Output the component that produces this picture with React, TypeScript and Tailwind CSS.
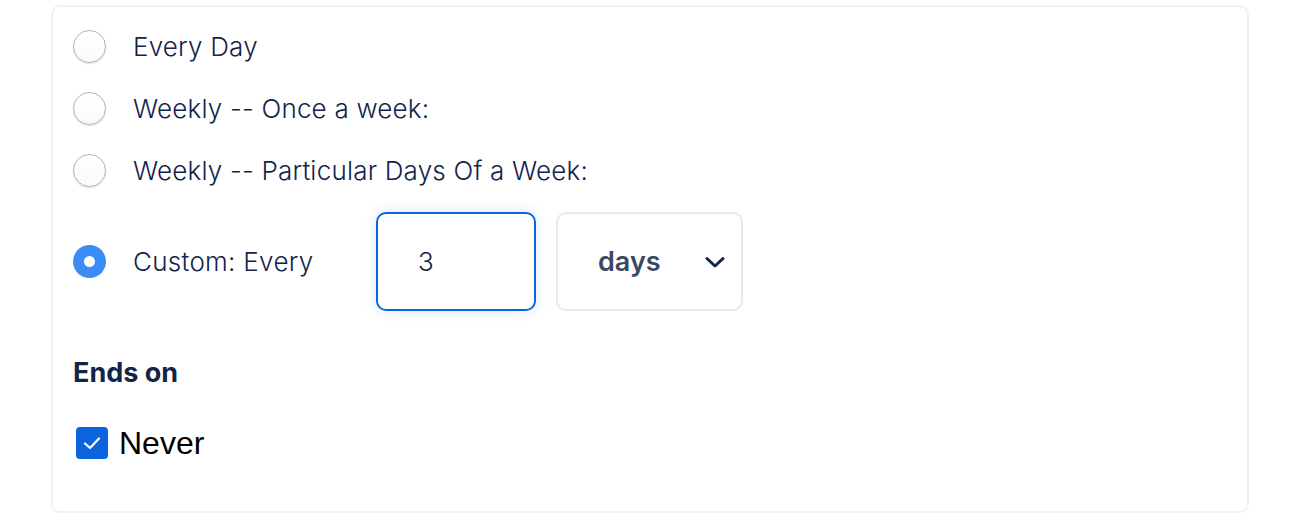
import React from "react";

const Radio = ({ checked }: { checked?: boolean }) =>
  checked ? (
    <span className="flex h-[33px] w-[33px] shrink-0 items-center justify-center rounded-full bg-[#3b8cf7]">
      <span className="h-[11px] w-[11px] rounded-full bg-white" />
    </span>
  ) : (
    <span className="block h-[33px] w-[33px] shrink-0 rounded-full border-[1.5px] border-[#b3b3b3] bg-gradient-to-b from-white to-[#fafafa] shadow-[0_1px_1.5px_rgba(0,0,0,0.14)]" />
  );

export default function App() {
  return (
    <div className="min-h-[526px] bg-white pl-[51px] pt-[5px]" style={{ fontFamily: "Inter, 'Noto Sans', sans-serif" }}>
      <div className="flex h-[508px] w-[1198px] flex-col rounded-[9px] border-2 border-[#f1f1f1] pl-[20px] pt-[8px]">
        {["Every Day", "Weekly -- Once a week:", "Weekly -- Particular Days Of a Week:"].map((t) => (
          <div key={t} className="flex h-[62px] items-center">
            <Radio />
            <span className="ml-[27px] text-[26px] font-light tracking-[0.2px] text-[#122449]">{t}</span>
          </div>
        ))}
        <div className="mt-[11px] flex h-[99px] items-center">
          <Radio checked />
          <span className="ml-[27px] w-[243px] text-[26px] font-light tracking-[0.3px] text-[#122449]">Custom: Every</span>
          <div className="flex h-[99px] w-[160px] items-center rounded-[10px] border-2 border-[#0b66dd] bg-white pl-[40px] text-[26px] font-light text-[#122449] shadow-[0_0_14px_rgba(11,102,221,0.14)]">
            3
          </div>
          <div className="ml-[20px] flex h-[99px] w-[187px] items-center justify-between rounded-[10px] border-2 border-[#e6eaf3] bg-white pl-[40px] pr-[16px] pt-[2px]">
            <span className="text-[27px] font-semibold text-[#3a4961]">days</span>
            <svg width="20" height="13" viewBox="0 0 20 13" fill="none">
              <path d="M2 2.5 L10 10 L18 2.5" stroke="#14244a" strokeWidth="3" strokeLinecap="round" strokeLinejoin="round" />
            </svg>
          </div>
        </div>
        <div className="mt-[46px] h-[32px] text-[27px] font-bold leading-[32px] text-[#12244a]">Ends on</div>
        <div className="mt-[38px] flex items-center">
          <span className="ml-[3px] flex h-[32px] w-[32px] items-center justify-center rounded-[4px] bg-[#0b63de]">
            <svg width="20" height="16" viewBox="0 0 20 16" fill="none">
              <path d="M3 8.5 L8 13 L17 3.5" stroke="white" strokeWidth="2.2" strokeLinecap="round" strokeLinejoin="round" />
            </svg>
          </span>
          <span className="ml-[11px] text-[32px] leading-[32px] text-black" style={{ fontFamily: "'Liberation Sans', Arial, sans-serif" }}>Never</span>
        </div>
      </div>
    </div>
  );
}
